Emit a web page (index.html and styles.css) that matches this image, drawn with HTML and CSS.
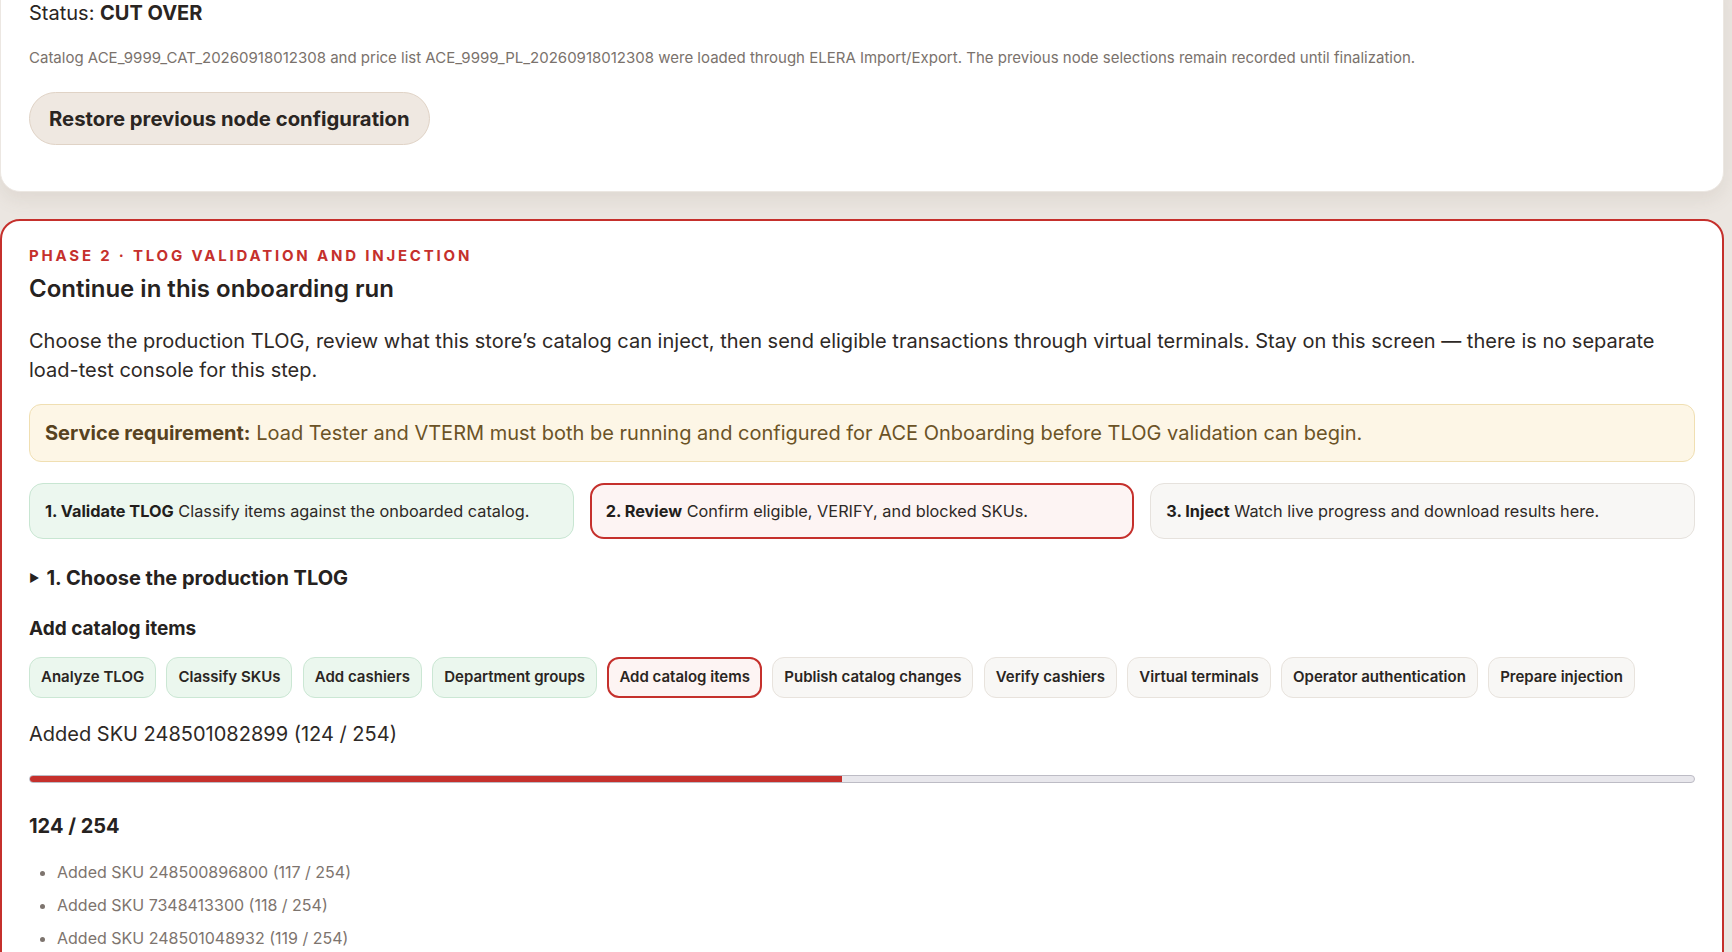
FILE: index.html
```html
<!DOCTYPE html>
<html lang="en">
<head>
<meta charset="utf-8">
<title>ACE Onboarding</title>
<link rel="stylesheet" href="styles.css">
</head>
<body>
<div class="page">
  <section class="card card-status">
    <p class="status">Status: <strong>CUT OVER</strong></p>
    <p class="desc">Catalog ACE_9999_CAT_20260918012308 and price list ACE_9999_PL_20260918012308 were loaded through ELERA Import/Export. The previous node selections remain recorded until finalization.</p>
    <button class="btn-restore" type="button">Restore previous node configuration</button>
  </section>

  <section class="card card-phase">
    <div class="eyebrow">Phase 2 · TLOG validation and injection</div>
    <h2 class="title">Continue in this onboarding run</h2>
    <p class="lead">Choose the production TLOG, review what this store’s catalog can inject, then send eligible transactions through virtual terminals. Stay on this screen — there is no separate load-test console for this step.</p>

    <div class="notice"><strong>Service requirement:</strong> Load Tester and VTERM must both be running and configured for ACE Onboarding before TLOG validation can begin.</div>

    <div class="steps">
      <div class="step step-done"><strong>1. Validate TLOG</strong> Classify items against the onboarded catalog.</div>
      <div class="step step-active"><strong>2. Review</strong> Confirm eligible, VERIFY, and blocked SKUs.</div>
      <div class="step step-todo"><strong>3. Inject</strong> Watch live progress and download results here.</div>
    </div>

    <div class="disclosure"><span class="caret">▶</span>1. Choose the production TLOG</div>

    <h3 class="subhead">Add catalog items</h3>
    <div class="chips">
      <span class="chip chip-done">Analyze TLOG</span>
      <span class="chip chip-done">Classify SKUs</span>
      <span class="chip chip-done">Add cashiers</span>
      <span class="chip chip-done">Department groups</span>
      <span class="chip chip-active">Add catalog items</span>
      <span class="chip">Publish catalog changes</span>
      <span class="chip">Verify cashiers</span>
      <span class="chip">Virtual terminals</span>
      <span class="chip">Operator authentication</span>
      <span class="chip">Prepare injection</span>
    </div>

    <p class="current">Added SKU 248501082899 (124 / 254)</p>
    <div class="progress"><div class="progress-fill" style="width:48.82%"></div></div>
    <p class="count">124 / 254</p>
    <ul class="log">
      <li>Added SKU 248500896800 (117 / 254)</li>
      <li>Added SKU 7348413300 (118 / 254)</li>
      <li>Added SKU 248501048932 (119 / 254)</li>
    </ul>
  </section>
</div>
</body>
</html>
```

FILE: styles.css
```css
* { box-sizing: border-box; }
html, body { margin: 0; padding: 0; }
body {
  background: #ebe6e1;
  font-family: "Inter", "Noto Sans", "Liberation Sans", sans-serif;
  color: #2a2522;
  overflow: hidden;
  height: 952px;
}
.page {
  margin-top: -30px;
  padding-right: 8px;
}
.card {
  background: #ffffff;
  border-radius: 20px;
}
.card-status {
  padding: 30px 28px 46px;
  box-shadow: 0 8px 18px rgba(120, 100, 80, 0.10);
  border: 1px solid #ece7e2;
}
.status {
  margin: 0;
  font-size: 20px;
  line-height: 25px;
  color: #2a2522;
}
.status strong { font-weight: 700; }
.desc {
  margin: 21px 0 0;
  font-size: 15px;
  line-height: 22px;
  color: #7a726c;
}
.btn-restore {
  margin-top: 23px;
  font-family: inherit;
  font-size: 20.3px;
  line-height: 25px;
  font-weight: 700;
  color: #2a2522;
  background: #efe8e1;
  border: 1px solid #e0d3c6;
  border-radius: 27px;
  padding: 13px 19px;
}
.card-phase {
  margin-top: 27px;
  border: 2px solid #c5302c;
  padding: 25px 27px 40px;
}
.eyebrow {
  font-size: 15px;
  line-height: 20px;
  font-weight: 700;
  letter-spacing: 2.8px;
  text-transform: uppercase;
  color: #c5302c;
}
.title {
  margin: 8px 0 0;
  font-size: 24px;
  line-height: 30px;
  font-weight: 600;
  color: #262220;
}
.lead {
  margin: 23px 0 0;
  font-size: 20px;
  line-height: 29px;
  color: #2e2926;
}
.notice {
  margin-top: 19px;
  padding: 15px 15px;
  font-size: 20px;
  line-height: 26px;
  color: #6b5326;
  background: #fdf6e6;
  border: 1px solid #f0dfb2;
  border-radius: 12px;
}
.notice strong { color: #574220; font-weight: 700; }
.steps {
  margin-top: 21px;
  display: grid;
  grid-template-columns: 1fr 1fr 1fr;
  gap: 16px;
}
.step {
  padding: 16px 15px;
  font-size: 16.3px;
  line-height: 22px;
  border-radius: 14px;
  border: 1px solid #e6e2dd;
  background: #f8f7f5;
  color: #2e2926;
}
.step strong { font-weight: 700; color: #221e1c; }
.step-done { background: #ecf7ef; border-color: #c8e6d2; }
.step-active { background: #fdf4f3; border: 2px solid #c5302c; padding: 15px 14px; }
.disclosure {
  margin-top: 26px;
  font-size: 20px;
  line-height: 26px;
  font-weight: 700;
  color: #262220;
  display: flex;
  align-items: center;
}
.caret {
  font-size: 11px;
  margin-right: 7px;
  margin-left: 0;
}
.subhead {
  margin: 26px 0 0;
  font-size: 19px;
  line-height: 24px;
  font-weight: 700;
  color: #262220;
}
.chips {
  margin-top: 16px;
  display: flex;
  flex-wrap: wrap;
  gap: 10.3px;
}
.chip {
  padding: 8px 11px;
  font-size: 15px;
  line-height: 22.5px;
  font-weight: 600;
  color: #2a2522;
  border-radius: 12px;
  border: 1px solid #e8e3dd;
  background: #f8f7f5;
}
.chip-done { background: #ebf7ee; border-color: #cbe7d4; }
.chip-active { background: #fdf4f3; border: 2px solid #c5302c; padding: 7px 10px; }
.current {
  margin: 23px 0 0;
  font-size: 20px;
  line-height: 26px;
  color: #2e2926;
}
.progress {
  margin-top: 28px;
  height: 8px;
  border-radius: 4px;
  background: #e8e7ec;
  border: 1px solid #bdbcc5;
  overflow: hidden;
}
.progress-fill {
  height: 100%;
  background: #c5302c;
}
.count {
  margin: 30px 0 0;
  font-size: 20px;
  line-height: 26px;
  font-weight: 700;
  color: #262220;
}
.log {
  margin: 17px 0 0;
  padding-left: 28px;
  font-size: 16px;
  line-height: 33px;
  color: #7d746e;
}
```
